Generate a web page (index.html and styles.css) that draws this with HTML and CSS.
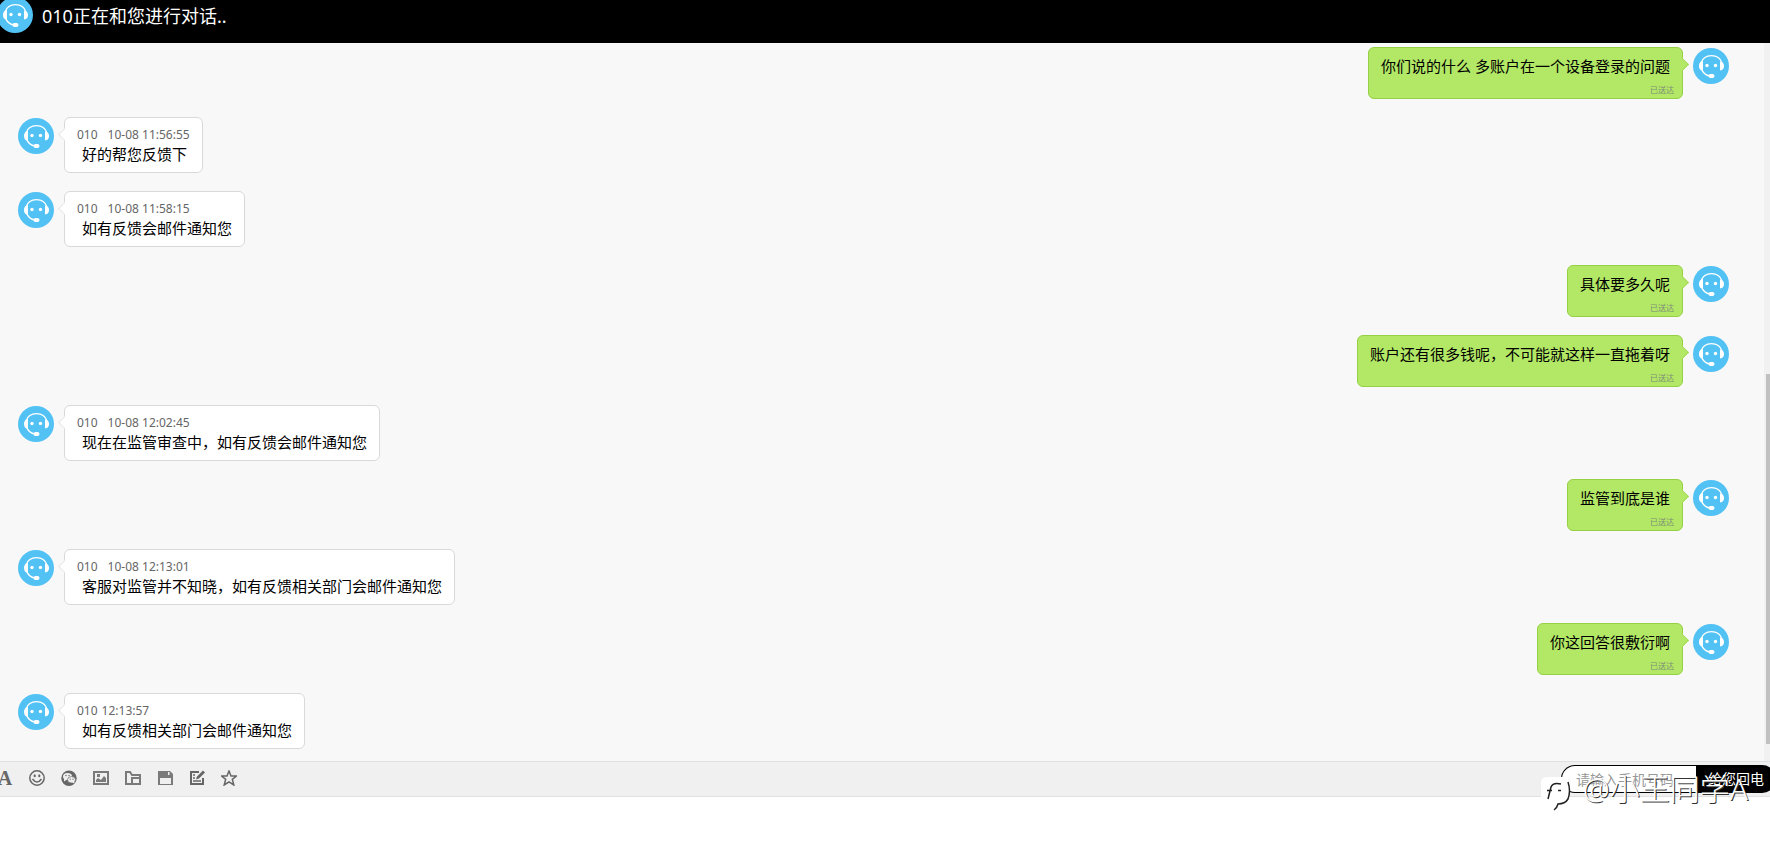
FILE: index.html
```
<!DOCTYPE html>
<html lang="zh-CN">
<head>
  <meta charset="UTF-8" />
  <meta name="viewport" content="width=device-width, initial-scale=1.0" />
  <title>在线客服</title>
  <link rel="stylesheet" href="styles.css">
</head>

<body>
  <!-- Shared avatar -->
  <svg class="sprite" aria-hidden="true">
    <symbol id="avatar" viewBox="0 0 36 36">
      <circle cx="18" cy="18" r="18" fill="#52c1f3"/>
      <path d="M8 15C9.500 10.500 13.500 7.700 18.500 7.700S27.500 10.500 29 15" fill="none" stroke="#fff" stroke-width="1.300"/>
      <path d="M10 13V22.500Q6 22.500 6 18T10 13Z" fill="#fff"/>
      <path d="M27 13.500Q31 14 31 18T27 22.500Z" fill="#fff"/>
      <path d="M8.500 21C10 25 13 27.500 17 28" fill="none" stroke="#fff" stroke-width="1.400"/>
      <rect x="15.500" y="26" width="6" height="4" rx="2" fill="#fff"/>
      <circle cx="14" cy="17.500" r="1.700" fill="#fff"/>
      <circle cx="22.500" cy="17.500" r="1.700" fill="#fff"/>
    </symbol>
  </svg>

  <header class="header">
    <svg class="avatar header-avatar"><use href="#avatar"/></svg>
    <h1 class="title">010正在和您进行对话..</h1>
  </header>

  <main class="chat">
    <div class="messages">
      <div class="message mine">
        <svg class="avatar"><use href="#avatar"/></svg>
        <div class="bubble">
          <p class="text">你们说的什么 多账户在一个设备登录的问题</p>
          <span class="status">已送达</span>
        </div>
      </div>
      <div class="message">
        <svg class="avatar"><use href="#avatar"/></svg>
        <div class="bubble">
          <div class="meta"><span class="name">010</span><time>10-08 11:56:55</time></div>
          <p class="text">好的帮您反馈下</p>
        </div>
      </div>
      <div class="message">
        <svg class="avatar"><use href="#avatar"/></svg>
        <div class="bubble">
          <div class="meta"><span class="name">010</span><time>10-08 11:58:15</time></div>
          <p class="text">如有反馈会邮件通知您</p>
        </div>
      </div>
      <div class="message mine">
        <svg class="avatar"><use href="#avatar"/></svg>
        <div class="bubble">
          <p class="text">具体要多久呢</p>
          <span class="status">已送达</span>
        </div>
      </div>
      <div class="message mine">
        <svg class="avatar"><use href="#avatar"/></svg>
        <div class="bubble">
          <p class="text">账户还有很多钱呢，不可能就这样一直拖着呀</p>
          <span class="status">已送达</span>
        </div>
      </div>
      <div class="message">
        <svg class="avatar"><use href="#avatar"/></svg>
        <div class="bubble">
          <div class="meta"><span class="name">010</span><time>10-08 12:02:45</time></div>
          <p class="text">现在在监管审查中，如有反馈会邮件通知您</p>
        </div>
      </div>
      <div class="message mine">
        <svg class="avatar"><use href="#avatar"/></svg>
        <div class="bubble">
          <p class="text">监管到底是谁</p>
          <span class="status">已送达</span>
        </div>
      </div>
      <div class="message">
        <svg class="avatar"><use href="#avatar"/></svg>
        <div class="bubble">
          <div class="meta"><span class="name">010</span><time>10-08 12:13:01</time></div>
          <p class="text">客服对监管并不知晓，如有反馈相关部门会邮件通知您</p>
        </div>
      </div>
      <div class="message mine">
        <svg class="avatar"><use href="#avatar"/></svg>
        <div class="bubble">
          <p class="text">你这回答很敷衍啊</p>
          <span class="status">已送达</span>
        </div>
      </div>
      <div class="message">
        <svg class="avatar"><use href="#avatar"/></svg>
        <div class="bubble">
          <div class="meta today"><span class="name">010</span><time>12:13:57</time></div>
          <p class="text">如有反馈相关部门会邮件通知您</p>
        </div>
      </div>
    </div>
    <div class="scrollbar"><div class="thumb"></div></div>
  </main>

  <!-- Toolbar -->
  <div class="toolbar">
    <div class="tools">
      <button class="tool tool-font" aria-label="字体">A</button>
      <button class="tool" aria-label="表情">
        <svg viewBox="0 0 16 16"><circle cx="8" cy="8" r="7.200" fill="none" stroke="#666" stroke-width="1.500"/><ellipse cx="5.700" cy="5.800" rx="1.100" ry="1.500" fill="#666"/><ellipse cx="10.300" cy="5.800" rx="1.100" ry="1.500" fill="#666"/><path d="M3.500 9Q8 15 12.500 9" fill="none" stroke="#666" stroke-width="1.500"/></svg>
      </button>
      <button class="tool" aria-label="微信表情">
        <svg viewBox="0 0 16 16"><circle cx="8" cy="8.300" r="7.700" fill="#666"/><ellipse cx="6.500" cy="6.500" rx="4.500" ry="3.600" fill="#efefef"/><path d="M3 8.500V11.500L6 9.500Z" fill="#efefef"/><ellipse cx="10.500" cy="9.800" rx="4" ry="3.200" fill="#efefef" stroke="#666" stroke-width=".7"/><path d="M11 12.500L13.500 13.500L13 11Z" fill="#efefef"/><g fill="#666"><circle cx="5" cy="5.500" r=".7"/><circle cx="8" cy="5.500" r=".7"/><circle cx="9.200" cy="9.200" r=".6"/><circle cx="12" cy="9.200" r=".6"/></g></svg>
      </button>
      <button class="tool" aria-label="图片">
        <svg viewBox="0 0 16 16"><path d="M1 2H15V14H1Z" fill="none" stroke="#7a7a7a" stroke-width="2"/><rect x="4" y="4" width="3" height="3" fill="#7a7a7a"/><path d="M3 12V10L5 8L8 10L11 6L13 8V12Z" fill="#7a7a7a"/></svg>
      </button>
      <button class="tool" aria-label="文件">
        <svg viewBox="0 0 16 16"><path d="M6 14H1V2H5L7 5H15V7" fill="none" stroke="#7a7a7a" stroke-width="2"/><path d="M7 8H15V14H7Z" fill="none" stroke="#7a7a7a" stroke-width="2"/></svg>
      </button>
      <button class="tool" aria-label="保存">
        <svg viewBox="0 0 16 16"><path d="M1 1H13L16 4V15H1Z" fill="#7a7a7a"/><path d="M3 8H14V14H3Z" fill="#efefef"/><path d="M11 2H12.500V5H11Z" fill="#efefef"/></svg>
      </button>
      <button class="tool" aria-label="评价">
        <svg viewBox="0 0 16 16"><path d="M10 2H2V14H14V8" fill="none" stroke="#666" stroke-width="2"/><path d="M4 5H6M4 8H6M4 11H12" stroke="#666" stroke-width="1.400"/><path d="M7 9.500L8 6.500L14 .5L16 2.500L10 8.500Z" fill="#666"/></svg>
      </button>
      <button class="tool" aria-label="收藏">
        <svg viewBox="0 0 16 16"><path d="M8 1L10 6H15.500L11.300 9.300L12.800 15L8 11.900L3.200 15L4.700 9.300L.5 6H6Z" fill="none" stroke="#666" stroke-width="1.500"/></svg>
      </button>
    </div>
    <form class="callback">
      <input class="phone" type="tel" placeholder="请输入手机号码" aria-label="手机号码">
      <button class="call" type="button">给您回电</button>
    </form>
    <div class="watermark">
      <svg class="watermark-logo" viewBox="0 0 30 34"><path d="M6 0H21Q27 0 28 6Q30 14 28 21Q25 27 18 27Q17 31 13 33V28H6Q0 28 0 22V6Q0 0 6 0Z" fill="#fff"/><path d="M27 5Q30 14 27 22Q24 27 17 27Q16 31 13 33M7 22L10 10Q12 5 20 7M6 13.500H11M17 13.500H20" fill="none" stroke="#222" stroke-width="1.500"/></svg>
      <span>@小王同学A</span>
    </div>
  </div>

  <textarea class="editor" aria-label="输入消息"></textarea>
</body>
</html>
```
FILE: styles.css
```
* {
  box-sizing: border-box;
}

body {
  margin: 0;
  height: 100vh;
  display: flex;
  flex-direction: column;
  overflow: hidden;
  background: #fff;
  color: #000;
  font-family: "Noto Sans", "Noto Sans CJK SC", sans-serif;
}

button, input, textarea {
  font-family: inherit;
}

.sprite {
  position: absolute;
  width: 0;
  height: 0;
}

.avatar {
  flex: none;
  width: 36px;
  height: 36px;
}

/* Header */
.header {
  flex: none;
  display: flex;
  align-items: flex-start;
  gap: 9px;
  height: 43px;
  background: #000;
  color: #fff;
}

.header-avatar {
  margin: -3px 0 0 -3px;
}

.title {
  margin: 4px 0 0;
  font-size: 18px;
  line-height: 24px;
  font-weight: 400;
}

/* Messages */
.chat {
  flex: none;
  display: flex;
  background: #f8f8f8;
}

.messages {
  flex: 1;
  display: flex;
  flex-direction: column;
  gap: 18px;
  padding: 4px 35px 12px 18px;
}

.message {
  display: flex;
  align-items: flex-start;
  gap: 10px;
}

.message .avatar {
  margin-top: 1px;
}

.mine {
  flex-direction: row-reverse;
}

.bubble {
  position: relative;
  min-height: 56px;
  padding: 7px 12px 5px;
  background: #fff;
  border: 1px solid #d9d9d9;
  border-radius: 6px;
}

.bubble::before {
  content: "";
  position: absolute;
  top: 12px;
  left: -5px;
  width: 8px;
  height: 8px;
  background: #fff;
  border: solid #e6e6e6;
  border-width: 0 0 1px 1px;
  transform: rotate(45deg);
}

.mine .bubble {
  min-height: 52px;
  background: #b2e866;
  border-color: #96d044;
}

.mine .bubble::before {
  left: auto;
  right: -5px;
  background: #b2e866;
  border-color: #a5dc58;
  border-width: 1px 1px 0 0;
}

.meta {
  display: flex;
  gap: 10px;
  color: #666;
  font-size: 12px;
  line-height: 19px;
}

.today {
  gap: 4px;
}

.text {
  margin: 0;
  padding-left: 5px;
  font-size: 15px;
  line-height: 20px;
  white-space: nowrap;
}

.mine .text {
  padding: 1px 0 0;
}

.status {
  position: absolute;
  right: 8px;
  bottom: 2px;
  color: #7f8c78;
  font-size: 8px;
  line-height: 12px;
}

.scrollbar {
  display: flex;
  flex-direction: column;
  width: 6px;
  padding: 331px 0 17px 2px;
  background: #f1f1f1;
}

.thumb {
  flex: 1;
  background: #c1c1c1;
}

/* Toolbar */
.toolbar {
  position: relative;
  flex: none;
  display: flex;
  align-items: center;
  justify-content: space-between;
  height: 36px;
  background: #f0f0f0;
  border: solid #e0e0e0;
  border-width: 1px 0;
}

.tools {
  display: flex;
  gap: 16px;
  margin: 0 0 2px -3px;
}

.tool {
  width: 16px;
  height: 16px;
  padding: 0;
  border: none;
  background: none;
  color: #666;
  cursor: pointer;
}

.tool svg {
  display: block;
  width: 16px;
  height: 16px;
}

.tool-font {
  font-family: "Liberation Serif", serif;
  font-size: 20px;
  line-height: 16px;
  font-weight: 700;
}

.callback {
  display: flex;
  height: 28px;
  margin-right: -6px;
}

.phone {
  width: 135px;
  padding: 0 14px;
  border: 1px solid #000;
  border-right: none;
  border-radius: 14px 0 0 14px;
  background: #fff;
  font-size: 14px;
}

.phone::placeholder {
  color: #999;
}

.call {
  width: 80px;
  padding: 0 0 2px;
  border: none;
  border-radius: 0 14px 14px 0;
  background: #000;
  color: #fff;
  font-size: 14px;
}

.watermark {
  position: absolute;
  top: 9px;
  right: 22px;
  display: flex;
  gap: 12px;
  color: #fff;
  font-size: 30px;
  line-height: 36px;
  font-weight: 300;
  text-shadow: 1px 1px 0 #333;
  pointer-events: none;
}

.watermark-logo {
  width: 30px;
  height: 34px;
  margin-top: 6px;
}

.editor {
  flex: 1;
  border: none;
  outline: none;
  resize: none;
  padding: 8px;
  font-size: 15px;
}
```
